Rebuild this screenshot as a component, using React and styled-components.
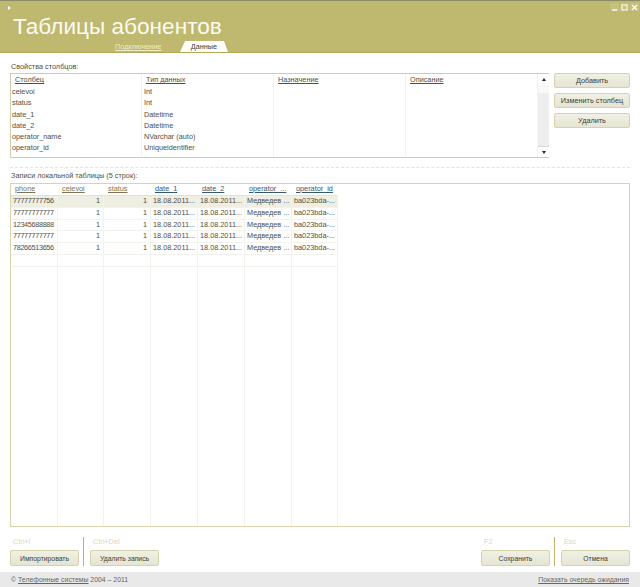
import React from 'react';
import styled, { createGlobalStyle } from 'styled-components';

const GlobalStyle = createGlobalStyle`
  html, body {
    margin: 0;
    padding: 0;
    background: #fff;
  }
`;

const Window = styled.div`
  width: 640px;
  height: 587px;
  display: flex;
  flex-direction: column;
  overflow: hidden;
  font-family: 'Liberation Sans', sans-serif;
  font-size: 7.3px;
  color: #4f4f44;
`;

const Header = styled.div`
  position: relative;
  height: 53px;
  box-sizing: border-box;
  flex: none;
  background: #bfb96f;
  border-top: 1px solid #8d8a68;
  border-bottom: 1px solid #b3ab55;
`;

const MenuMark = styled.div`
  position: absolute;
  left: 8px;
  top: 5px;
  width: 0;
  height: 0;
  border-left: 3px solid #fff;
  border-top: 2px solid transparent;
  border-bottom: 2px solid transparent;
`;

const Title = styled.div`
  position: absolute;
  left: 13px;
  top: 11px;
  font-size: 22.6px;
  line-height: 30px;
  color: #fbfbf3;
`;

const WindowButtons = styled.div`
  position: absolute;
  right: 1px;
  top: 2px;
  display: flex;
  gap: 1px;
`;

const WindowButton = styled.div`
  width: 9px;
  height: 8px;
  background: #c6c17f;
  display: flex;
  align-items: center;
  justify-content: center;
`;

const Tabs = styled.div`
  position: absolute;
  left: 115px;
  bottom: 0;
  display: flex;
  align-items: flex-end;
  gap: 22px;
`;

const Tab = styled.div`
  width: 43px;
  height: 11px;
  line-height: 11px;
  white-space: nowrap;
  color: #efecc9;
  text-decoration: underline;
`;

const ActiveTab = styled.div`
  width: 48px;
  height: 11px;
  line-height: 12px;
  text-align: center;
  color: #3f3f36;
  background: #fff;
  clip-path: polygon(0 100%, 5px 0, calc(100% - 4px) 0, 100% 100%);
`;

const Content = styled.div`
  flex: 1;
  min-height: 0;
  display: flex;
  flex-direction: column;
  padding: 0 10px;
`;

const Label = styled.div`
  height: 10px;
  line-height: 10px;
  padding-left: 1px;
`;

const PropsLabel = styled(Label)`
  margin-top: 9px;
`;

const PropsRow = styled.div`
  display: flex;
  margin-top: 1px;
  gap: 5px;
`;

const PropsBox = styled.div`
  width: 539px;
  height: 85px;
  box-sizing: border-box;
  display: flex;
  border: 1px solid #d2ccaa;
`;

const PropsColumn = styled.div`
  width: ${p => p.$width}px;
  flex: none;
  box-sizing: border-box;
  padding: 0 1px;
  border-right: 1px solid #f3f3ee;
`;

const PropsHead = styled.div`
  height: 11px;
  line-height: 11px;
  padding-left: 3px;
  margin-bottom: 1px;
  text-decoration: underline;
  color: #55503a;
`;

const PropsCell = styled.div`
  height: 11.3px;
  line-height: 11.3px;
  padding-left: ${p => p.$indent || 0}px;
`;

const Scrollbar = styled.div`
  width: 11px;
  flex: none;
  display: flex;
  flex-direction: column;
  background: #eeeeee;
  margin-left: auto;
`;

const ScrollArrow = styled.div`
  height: 10px;
  flex: none;
  background: #fff;
  display: flex;
  align-items: center;
  justify-content: center;
  &::after {
    content: '';
    border-left: 2.5px solid transparent;
    border-right: 2.5px solid transparent;
    ${p => (p.$down ? 'border-top: 3px solid #222;' : 'border-bottom: 3px solid #222;')}
  }
`;

const ScrollThumb = styled.div`
  height: 9px;
  flex: none;
  background: #f9f9f9;
`;

const ScrollTrack = styled.div`
  flex: 1;
  border-bottom: 1px solid #d8d8d8;
`;

const SideButtons = styled.div`
  display: flex;
  flex-direction: column;
  gap: 5px;
`;

const Button = styled.div`
  width: 76px;
  height: 15px;
  box-sizing: border-box;
  display: flex;
  align-items: center;
  justify-content: center;
  background: linear-gradient(#f0f0e4, #e6e5d3);
  border: 1px solid #d5d2ae;
  border-radius: 2px;
  color: #3d3d35;
`;

const ActionButton = styled(Button)`
  width: 69px;
  height: 16px;
  font-size: 6.8px;
`;

const Divider = styled.div`
  margin-top: 9px;
  width: 620px;
  border-top: 1px dashed #e3e3d8;
`;

const RecordsLabel = styled(Label)`
  margin-top: 3px;
`;

const Grid = styled.div`
  margin-top: 2px;
  flex: 1;
  min-height: 0;
  display: flex;
  flex-direction: column;
  border: 1px solid #d8d4ac;
`;

const GridHead = styled.div`
  display: flex;
  height: 12px;
  width: 327px;
  flex: none;
  box-sizing: border-box;
  border-bottom: 1px solid #e4e2cc;
`;

const GridBody = styled.div`
  flex: 1;
  display: flex;
  flex-direction: column;
`;

const DataRow = styled.div`
  display: flex;
  height: 11.8px;
  flex: none;
  box-sizing: border-box;
  width: 327px;
  background: ${p => (p.$selected ? '#efeee3' : 'transparent')};
  border-bottom: 1px solid #f3f3ee;
`;

const FillRow = styled.div`
  flex: 1;
  display: flex;
  width: 327px;
`;

const Cell = styled.div`
  width: ${p => p.$width}px;
  flex: none;
  box-sizing: border-box;
  padding: 0 3px 0 2px;
  line-height: 10.8px;
  white-space: nowrap;
  overflow: hidden;
  letter-spacing: ${p => (p.$tight ? '-0.35px' : '0')};
  text-align: ${p => (p.$right ? 'right' : 'left')};
  border-right: 1px solid #f3f3ee;
`;

const HeadCell = styled(Cell)`
  padding-left: 4px;
  text-decoration: underline;
  color: ${p => (p.$blue ? '#33586f' : '#7a7550')};
  border-right: none;
`;

const Footer = styled.div`
  display: flex;
  align-items: flex-end;
  height: 39px;
  flex: none;
`;

const Action = styled.div`
  display: flex;
  flex-direction: column;
  align-items: flex-start;
`;

const Hotkey = styled.div`
  height: 13px;
  line-height: 10px;
  padding-left: 3px;
  color: #d6d6cb;
`;

const Separator = styled.div`
  width: 1px;
  height: 29px;
  margin: 0 6px 0 4px;
  background: #bdb46a;
`;

const FooterSpacer = styled.div`
  flex: 1;
`;

const StatusBar = styled.div`
  margin-top: 6px;
  height: 15px;
  flex: none;
  display: flex;
  align-items: center;
  justify-content: space-between;
  padding: 0 11px;
  font-size: 6.9px;
  background: #e9e9e9;
  color: #66665c;
`;

const StatusLink = styled.span`
  text-decoration: underline;
`;

const fields = [
  ['celevoi', 'Int'],
  ['status', 'Int'],
  ['date_1', 'Datetime'],
  ['date_2', 'Datetime'],
  ['operator_name', 'NVarchar (auto)'],
  ['operator_id', 'Uniqueidentifier'],
];

const columns = [
  { name: 'phone', width: 47 },
  { name: 'celevoi', width: 46, right: true },
  { name: 'status', width: 47, right: true },
  { name: 'date_1', width: 47, blue: true },
  { name: 'date_2', width: 47, blue: true },
  { name: 'operator_...', width: 47, blue: true },
  { name: 'operator_id', width: 46, blue: true },
];

const phones = ['77777777756', '77777777777', '12345688888', '77777777777', '78266513656'];

export default function App() {
  return (
    <Window>
      <GlobalStyle />
      <Header>
        <MenuMark />
        <Title>Таблицы абонентов</Title>
        <WindowButtons>
          <WindowButton>
            <svg width="7" height="7" viewBox="0 0 7 7"><path d="M1 6h5" stroke="#fff" strokeWidth="1.4" /></svg>
          </WindowButton>
          <WindowButton>
            <svg width="7" height="7" viewBox="0 0 7 7"><rect x="1" y="1" width="5" height="5" fill="none" stroke="#fff" /></svg>
          </WindowButton>
          <WindowButton>
            <svg width="7" height="7" viewBox="0 0 7 7"><path d="M1 1l5 5M6 1L1 6" stroke="#fff" strokeWidth="1.1" /></svg>
          </WindowButton>
        </WindowButtons>
        <Tabs>
          <Tab>Подключение</Tab>
          <ActiveTab>Данные</ActiveTab>
        </Tabs>
      </Header>
      <Content>
        <PropsLabel>Свойства столбцов:</PropsLabel>
        <PropsRow>
          <PropsBox>
            <PropsColumn $width={131}>
              <PropsHead>Столбец</PropsHead>
              {fields.map(f => <PropsCell key={f[0]}>{f[0]}</PropsCell>)}
            </PropsColumn>
            <PropsColumn $width={132}>
              <PropsHead>Тип данных</PropsHead>
              {fields.map(f => <PropsCell key={f[0]} $indent={1}>{f[1]}</PropsCell>)}
            </PropsColumn>
            <PropsColumn $width={132}>
              <PropsHead>Назначение</PropsHead>
            </PropsColumn>
            <PropsColumn $width={132}>
              <PropsHead>Описание</PropsHead>
            </PropsColumn>
            <Scrollbar>
              <ScrollArrow />
              <ScrollThumb />
              <ScrollTrack />
              <ScrollArrow $down />
            </Scrollbar>
          </PropsBox>
          <SideButtons>
            <Button>Добавить</Button>
            <Button>Изменить столбец</Button>
            <Button>Удалить</Button>
          </SideButtons>
        </PropsRow>
        <Divider />
        <RecordsLabel>Записи локальной таблицы (5 строк):</RecordsLabel>
        <Grid>
          <GridHead>
            {columns.map(c => (
              <HeadCell key={c.name} $width={c.width} $blue={c.blue}>{c.name}</HeadCell>
            ))}
          </GridHead>
          <GridBody>
            {phones.map((phone, i) => (
              <DataRow key={i} $selected={i === 0}>
                <Cell $width={47} $tight>{phone}</Cell>
                <Cell $width={46} $right>1</Cell>
                <Cell $width={47} $right>1</Cell>
                <Cell $width={47}>18.08.2011...</Cell>
                <Cell $width={47}>18.08.2011...</Cell>
                <Cell $width={47}>Медведев ...</Cell>
                <Cell $width={46}>ba023bda-...</Cell>
              </DataRow>
            ))}
            <DataRow>
              {columns.map(c => <Cell key={c.name} $width={c.width} />)}
            </DataRow>
            <FillRow>
              {columns.map(c => <Cell key={c.name} $width={c.width} />)}
            </FillRow>
          </GridBody>
        </Grid>
        <Footer>
          <Action>
            <Hotkey>Ctrl+I</Hotkey>
            <ActionButton>Импортировать</ActionButton>
          </Action>
          <Separator />
          <Action>
            <Hotkey>Ctrl+Del</Hotkey>
            <ActionButton>Удалить запись</ActionButton>
          </Action>
          <FooterSpacer />
          <Action>
            <Hotkey>F2</Hotkey>
            <ActionButton>Сохранить</ActionButton>
          </Action>
          <Separator />
          <Action>
            <Hotkey>Esc</Hotkey>
            <ActionButton>Отмена</ActionButton>
          </Action>
        </Footer>
      </Content>
      <StatusBar>
        <span>© <StatusLink>Телефонные системы</StatusLink> 2004 – 2011</span>
        <StatusLink>Показать очередь ожидания</StatusLink>
      </StatusBar>
    </Window>
  );
}
